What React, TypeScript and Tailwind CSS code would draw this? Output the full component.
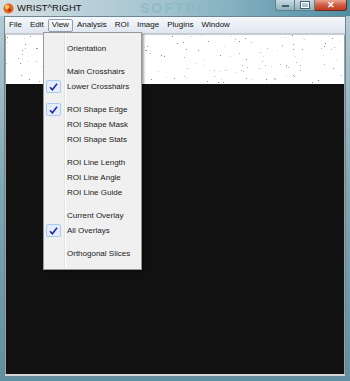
import React from "react";

function rng(seed: number) {
  let s = seed;
  return () => {
    s = (s * 1103515245 + 12345) & 0x7fffffff;
    return s / 0x7fffffff;
  };
}

const dots = (() => {
  const r = rng(42);
  const arr: { x: number; y: number; c: string }[] = [];
  for (let i = 0; i < 170; i++) {
    const x = Math.floor(r() * 340);
    const y = Math.floor(r() * 49);
    const shade = r();
    const c = shade < 0.35 ? "#8a8a8a" : shade < 0.7 ? "#b4b4b4" : "#d6d6d6";
    arr.push({ x, y, c });
  }
  return arr;
})();

const Check = () => (
  <div className="absolute left-[2px] top-[1px] w-[15px] h-[13px] rounded-[2px] border border-[#a9c9ef] bg-[#e4eefb] flex items-center justify-center">
    <svg width="9" height="8" viewBox="0 0 9 8">
      <path d="M1 4.2 L3.4 6.8 L8 0.8" fill="none" stroke="#2327a0" strokeWidth="1.6" />
    </svg>
  </div>
);

type Item = { label?: string; checked?: boolean; sep?: boolean };
const items: Item[] = [
  { label: "Orientation" },
  { sep: true },
  { label: "Main Crosshairs" },
  { label: "Lower Crosshairs", checked: true },
  { sep: true },
  { label: "ROI Shape Edge", checked: true },
  { label: "ROI Shape Mask" },
  { label: "ROI Shape Stats" },
  { sep: true },
  { label: "ROI Line Length" },
  { label: "ROI Line Angle" },
  { label: "ROI Line Guide" },
  { sep: true },
  { label: "Current Overlay" },
  { label: "All Overlays", checked: true },
  { sep: true },
  { label: "Orthogonal Slices" },
];

const menus = ["File", "Edit", "View", "Analysis", "ROI", "Image", "Plugins", "Window"];

export default function App() {
  return (
    <div
      className="relative w-[350px] h-[381px] overflow-hidden flex flex-col bg-gradient-to-b from-[#b9cdd6] via-[#7ea6b5] to-[#5f8fa2]"
      style={{ fontFamily: '"Liberation Sans", Arial, sans-serif' }}
    >
      {/* title bar */}
      <div className="relative h-[16px] flex items-center bg-gradient-to-r from-[#d6e0e5] via-[#9ec0cc] to-[#4e8ea4]">
        <div className="absolute left-[140px] top-[1px] text-[14px] leading-[15px] font-bold tracking-[2px] text-[#86b8c8] opacity-70">
          SOFTPEDIA
        </div>
        <svg className="ml-[3px] relative" width="11" height="11" viewBox="0 0 11 11">
          <circle cx="5.5" cy="5.5" r="5" fill="#e2651c" />
          <circle cx="4" cy="4" r="2.2" fill="#f7c46a" />
          <circle cx="6.5" cy="7" r="1.8" fill="#b8330f" />
        </svg>
        <span className="relative ml-[3px] text-[9.5px] leading-none text-[#111]">WRIST^RIGHT</span>
        <div className="absolute right-[3px] top-0 flex h-[11px]">
          <div className="w-[20px] h-full rounded-bl-[3px] border border-t-0 border-[#5c7f8c] bg-gradient-to-b from-[#c9dbe2] to-[#8fb0bd] flex items-center justify-center">
            <div className="w-[7px] h-[2px] bg-white border border-[#44606b] mt-[2px]" />
          </div>
          <div className="w-[20px] h-full border border-t-0 border-l-0 border-[#5c7f8c] bg-gradient-to-b from-[#c9dbe2] to-[#8fb0bd] flex items-center justify-center">
            <div className="w-[8px] h-[6px] border border-white outline outline-1 outline-[#44606b]" />
          </div>
          <div className="w-[32px] h-full rounded-br-[3px] border border-t-0 border-l-0 border-[#6b2a1e] bg-gradient-to-b from-[#e8a493] via-[#d05b43] to-[#c03a20] flex items-center justify-center text-white text-[9px] font-bold leading-none">
            ✕
          </div>
        </div>
      </div>

      {/* client area */}
      <div className="flex-1 mx-[4px] mb-[4px] border border-[#6b8794] flex flex-col">
        {/* menu bar */}
        <div className="h-[16px] flex items-center bg-gradient-to-b from-[#f6f8fc] to-[#dfe6f0] text-[8px] text-[#111] leading-none">
          {menus.map((m) => (
            <div
              key={m}
              className={
                m === "View"
                  ? "h-[13px] px-[3px] flex items-center rounded-[2px] border border-[#8fa0b3] bg-gradient-to-b from-[#fbfcfe] to-[#e4e9f1]"
                  : "h-[13px] px-[4px] flex items-center"
              }
            >
              {m}
            </div>
          ))}
        </div>
        <div className="h-[2px] bg-[#c8ccd2]" />
        <div className="flex-1 flex flex-col border-x border-[#a0a0a0]">
          <div className="h-[49px] bg-white relative">
            <svg className="absolute inset-0" width="340" height="49">
              {dots.map((d, i) => (
                <rect key={i} x={d.x} y={d.y} width="1" height="1" fill={d.c} />
              ))}
            </svg>
          </div>
          <div className="flex-1 bg-[#111111]" />
        </div>
        <div className="h-[2px] bg-[#d4d4d4]" />
      </div>

      {/* dropdown */}
      <div className="absolute left-[43px] top-[32px] w-[99px] h-[238px] bg-[#f0f0f0] border border-[#979797] shadow-[2px_2px_2px_rgba(0,0,0,0.35)] py-[8px]">
        <div className="absolute left-[20px] top-[1px] bottom-[1px] w-[1px] bg-[#e2e3e3]" />
        <div className="absolute left-[21px] top-[1px] bottom-[1px] w-[1px] bg-white" />
        {items.map((it, i) =>
          it.sep ? (
            <div key={i} className="h-[8px]" />
          ) : (
            <div key={i} className="relative h-[15px] flex items-center pl-[23px] text-[8px] text-[#1a1a1a] leading-none whitespace-nowrap">
              {it.checked && <Check />}
              {it.label}
            </div>
          )
        )}
      </div>
    </div>
  );
}
